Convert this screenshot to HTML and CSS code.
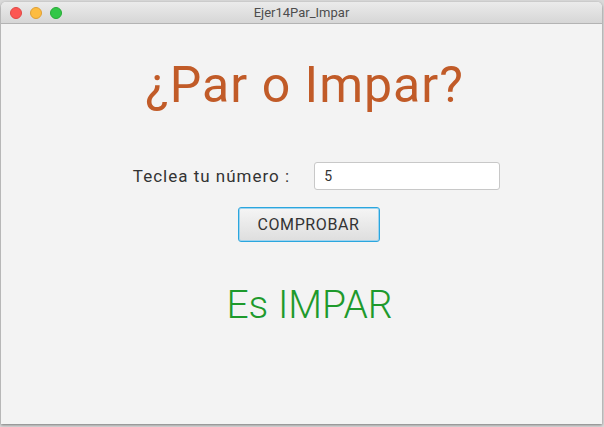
FILE: index.html
```html
<!DOCTYPE html>
<html lang="es">
<head>
<meta charset="utf-8">
<title>Ejer14Par_Impar</title>
<link rel="stylesheet" href="styles.css">
</head>
<body>
<div class="desktop">
  <div class="window">
    <div class="titlebar">
      <div class="lights">
        <span class="light red"></span>
        <span class="light yellow"></span>
        <span class="light green"></span>
      </div>
      <div class="title">Ejer14Par_Impar</div>
    </div>
    <div class="content">
      <h1 class="heading">¿Par o Impar?</h1>
      <div class="row">
        <label class="label" for="num">Teclea tu número :</label>
        <input class="field" id="num" type="text" value="5">
      </div>
      <button class="btn" type="button">COMPROBAR</button>
      <div class="result">Es IMPAR</div>
    </div>
  </div>
</div>
</body>
</html>
```
FILE: styles.css
```css
html, body {
  margin: 0;
  padding: 0;
}
body {
  width: 604px;
  height: 427px;
  overflow: hidden;
  background: #d9d9d9;
  font-family: "Roboto", "Liberation Sans", sans-serif;
}
.desktop {
  padding: 2px 0 0 1px;
}
.window {
  width: 601px;
  height: 422px;
  background: #f3f3f3;
  box-shadow: 0 1px 3px rgba(0,0,0,0.45);
  border-radius: 5px 5px 0 0;
  overflow: hidden;
  display: flex;
  flex-direction: column;
}
.titlebar {
  height: 21px;
  flex: none;
  position: relative;
  background: linear-gradient(#ebebeb, #d6d6d6);
  border-bottom: 1px solid #b3b3b3;
  display: flex;
  align-items: center;
  justify-content: center;
}
.lights {
  position: absolute;
  left: 9px;
  top: 5px;
  display: flex;
  gap: 8px;
}
.light {
  width: 12px;
  height: 12px;
  border-radius: 50%;
  box-sizing: border-box;
}
.red { background: #fc5753; border: 1px solid #df4744; }
.yellow { background: #fdbc40; border: 1px solid #de9f34; }
.green { background: #33c748; border: 1px solid #27aa35; }
.title {
  font-size: 13px;
  color: #4d4d4d;
  font-family: "Roboto", "Liberation Sans", sans-serif;
}
.content {
  flex: 1;
  display: flex;
  flex-direction: column;
  align-items: center;
  padding-left: 6px;
}
.heading {
  margin: 31px 0 0 0;
  font-size: 50px;
  font-weight: 400;
  line-height: 60px;
  color: #c15b28;
  letter-spacing: 1px;
}
.row {
  margin-top: 47px;
  display: flex;
  align-items: center;
  gap: 24px;
  margin-left: 24px;
}
.label {
  font-size: 17px;
  letter-spacing: 1px;
  color: #333333;
}
.field {
  width: 186px;
  height: 28px;
  box-sizing: border-box;
  border: 1px solid #c8c8c8;
  border-radius: 3px;
  background: #ffffff;
  font-family: "Roboto", "Liberation Sans", sans-serif;
  font-size: 14px;
  color: #333;
  padding: 0 9px;
  outline: none;
}
.btn {
  margin-top: 17px;
  margin-left: 8px;
  width: 142px;
  height: 35px;
  box-sizing: border-box;
  border: 1px solid #2aa6de;
  border-radius: 3px;
  background: linear-gradient(#f5f5f5, #dedede);
  box-shadow: inset 0 0 0 1px #9fd3ee;
  font-family: "Roboto", "Liberation Sans", sans-serif;
  font-size: 16px;
  letter-spacing: 0.6px;
  color: #333333;
  padding: 0;
}
.result {
  margin-top: 40px;
  margin-left: 10px;
  font-size: 39px;
  font-weight: 300;
  line-height: 46px;
  color: #1e9a2c;
}
```
